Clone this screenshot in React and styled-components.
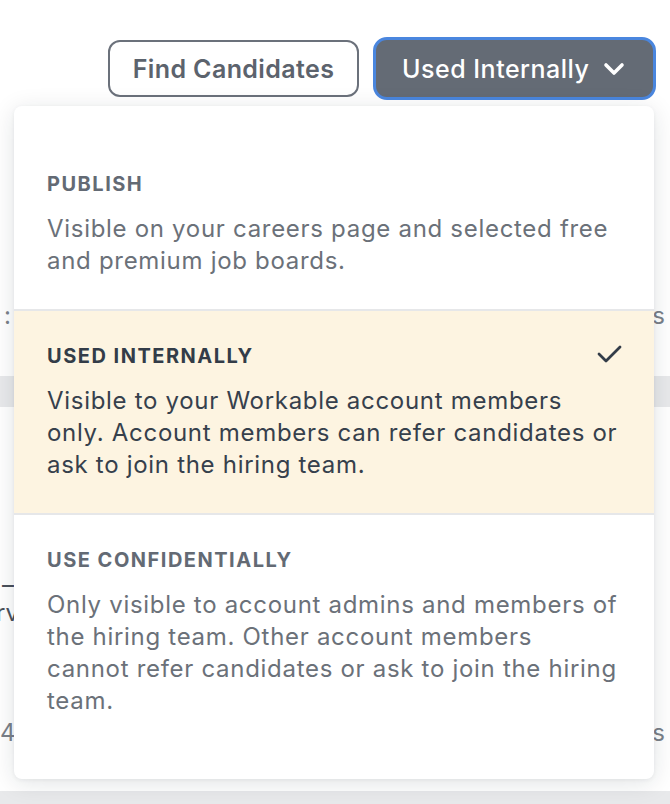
import React, { useState } from 'react';
import styled, { createGlobalStyle, css } from 'styled-components';

const GlobalStyle = createGlobalStyle`
  html, body {
    margin: 0;
    padding: 0;
    background: #fff;
    overflow: hidden;
  }
  body {
    font-family: Inter, 'Noto Sans', sans-serif;
    -webkit-font-smoothing: antialiased;
  }
`;

const Page = styled.div`
  position: relative;
  width: 670px;
  height: 804px;
  overflow: hidden;
  background: #fff;
`;

const Header = styled.header`
  display: flex;
  justify-content: flex-end;
  align-items: center;
  gap: 14px;
  height: 63px;
  padding: 37px 14px 0 0;
`;

const OutlineButton = styled.button`
  height: 57px;
  width: 251px;
  padding: 0;
  border: 2px solid #6b717b;
  border-radius: 12px;
  background: #fff;
  color: #5c636d;
  font-family: inherit;
  font-size: 25px;
  letter-spacing: 0.4px;
  font-weight: 600;
  cursor: pointer;
`;

const DropButton = styled.button`
  display: flex;
  align-items: center;
  gap: 14px;
  height: 63px;
  width: 283px;
  padding: 0 0 0 26px;
  border: 3px solid #4a86de;
  border-radius: 14px;
  background: #646b75;
  color: #fff;
  font-family: inherit;
  font-size: 25px;
  letter-spacing: 0.5px;
  font-weight: 500;
  cursor: pointer;
`;

/* background page content peeking out behind the menu */
const Content = styled.div`
  display: flex;
  flex-direction: column;
  font-size: 24px;
  color: #7a8089;
`;

const EdgeRow = styled.div`
  display: flex;
  justify-content: space-between;
  align-items: center;
  height: ${({ h }) => h}px;
  margin-top: ${({ top }) => top || 0}px;
  padding: 0 5px 0 4px;
  color: ${({ dark }) => (dark ? '#4a515b' : '#7a8089')};
`;

const Clip = styled.span`
  margin-left: ${({ shift }) => shift}px;
`;

const Band = styled.div`
  height: ${({ h }) => h}px;
  margin-top: ${({ top }) => top || 0}px;
  background: #e8e9eb;
`;

const Menu = styled.div`
  position: absolute;
  top: 106px;
  left: 14px;
  width: 640px;
  padding: 33px 0 30px;
  box-sizing: border-box;
  background: #fff;
  border-radius: 8px;
  box-shadow: 0 4px 24px rgba(20, 30, 45, 0.12), 0 1px 4px rgba(20, 30, 45, 0.06);
`;

const Option = styled.div`
  position: relative;
  padding: 33px 33px 32px;
  cursor: pointer;
  & + & {
    border-top: 2px solid #e6e7e9;
  }
  ${({ active }) =>
    active &&
    css`
      background: #fdf4e1;
    `}
`;

const Title = styled.div`
  font-size: 20px;
  line-height: 24px;
  font-weight: 700;
  letter-spacing: 0.075em;
  text-transform: uppercase;
  color: ${({ active }) => (active ? '#333c48' : '#636a74')};
  margin-bottom: 17px;
`;

const Desc = styled.div`
  font-size: 24px;
  line-height: 32px;
  letter-spacing: 0.7px;
  color: ${({ active }) => (active ? '#36404c' : '#6b7179')};
`;

const Check = styled.svg`
  position: absolute;
  top: 33px;
  right: 30px;
`;

const options = [
  {
    key: 'publish',
    title: 'Publish',
    desc: 'Visible on your careers page and selected free and premium job boards.',
  },
  {
    key: 'internal',
    title: 'Used Internally',
    desc: 'Visible to your Workable account members only. Account members can refer candidates or ask to join the hiring team.',
  },
  {
    key: 'confidential',
    title: 'Use Confidentially',
    desc: 'Only visible to account admins and members of the hiring team. Other account members cannot refer candidates or ask to join the hiring team.',
  },
];

export default function App() {
  const [selected, setSelected] = useState('internal');

  return (
    <Page>
      <GlobalStyle />
      <Header>
        <OutlineButton>Find Candidates</OutlineButton>
        <DropButton>
          Used Internally
          <svg width="22" height="14" viewBox="0 0 22 14" fill="none">
            <path d="M3 3l8 8 8-8" stroke="#fff" strokeWidth="3.6" strokeLinecap="round" strokeLinejoin="round" />
          </svg>
        </DropButton>
      </Header>

      <Content>
        <EdgeRow h={30} top={200}>
          <span>:</span>
          <span>s</span>
        </EdgeRow>
        <Band h={31} top={46} />
        <EdgeRow h={26} top={164} dark>
          <Clip shift={-2}>–</Clip>
          <span />
        </EdgeRow>
        <EdgeRow h={26} top={2} dark>
          <Clip shift={-8}>rv</Clip>
          <span />
        </EdgeRow>
        <EdgeRow h={30} top={92}>
          <Clip shift={-4}>4</Clip>
          <span>s</span>
        </EdgeRow>
        <Band h={20} top={44} />
      </Content>

      <Menu>
        {options.map((o) => {
          const active = o.key === selected;
          return (
            <Option key={o.key} active={active} onClick={() => setSelected(o.key)}>
              <Title active={active}>{o.title}</Title>
              <Desc active={active}>{o.desc}</Desc>
              {active && (
                <Check width="28" height="20" viewBox="0 0 28 20" fill="none">
                  <path d="M3 10l7 7L24 3" stroke="#333c48" strokeWidth="2.8" strokeLinecap="round" strokeLinejoin="round" />
                </Check>
              )}
            </Option>
          );
        })}
      </Menu>
    </Page>
  );
}
